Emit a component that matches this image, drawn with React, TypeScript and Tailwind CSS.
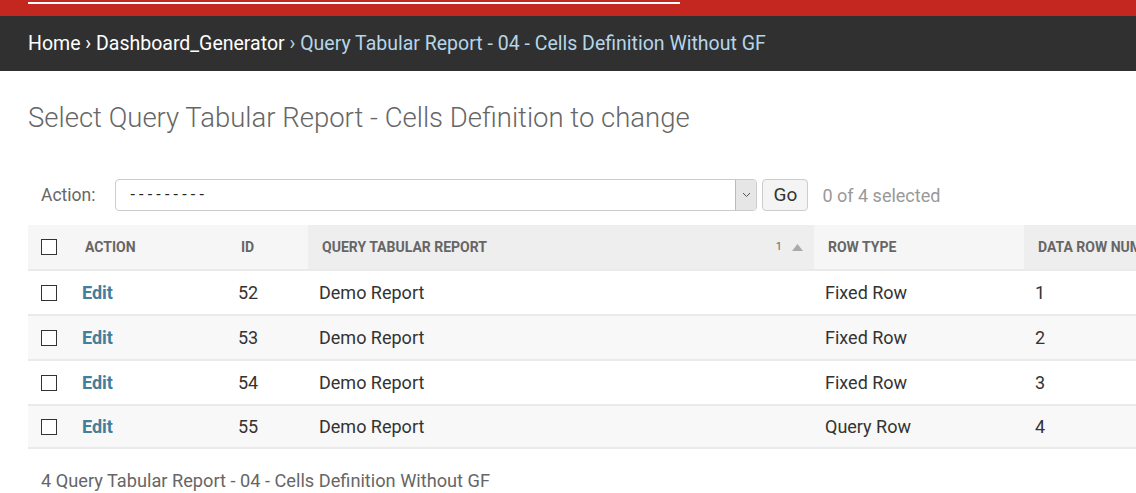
import React from "react";

const rows = [
  { id: 52, type: "Fixed Row", n: 1 },
  { id: 53, type: "Fixed Row", n: 2 },
  { id: 54, type: "Fixed Row", n: 3 },
  { id: 55, type: "Query Row", n: 4 },
];

function Box() {
  return <span className="block w-[16px] h-[16px] border border-[#333] bg-white" />;
}

export default function App() {
  return (
    <div className="w-[1136px] h-[493px] overflow-hidden bg-white" style={{ fontFamily: "Roboto, 'Liberation Sans', sans-serif" }}>
      <div className="h-[16px] bg-[#c4271f] pt-[2px] pl-[28px]">
        <div className="w-[652px] h-[2px] bg-white" />
      </div>
      <div className="h-[55px] bg-[#303030] flex items-center pl-[28px] text-[19.5px] text-white whitespace-pre">
        <span>Home</span>
        <span> › </span>
        <span>Dashboard_Generator</span>
        <span className="text-[#b5d6e8]"> › Query Tabular Report - 04 - Cells Definition Without GF</span>
      </div>
      <div className="pl-[28px] pt-[29px] h-[106px]">
        <h1 className="text-[27.5px] font-light text-[#666] leading-[36px]">
          Select Query Tabular Report - Cells Definition to change
        </h1>
      </div>
      <div className="flex items-center pl-[41px] h-[36px]">
        <span className="text-[17.5px] text-[#666]">Action:</span>
        <div className="ml-[20px] w-[642px] h-[32px] border border-[#ccc] rounded-[4px] flex items-center overflow-hidden">
          <span className="flex-1 pl-[14px] text-[16px] text-[#222] tracking-[4.2px]">---------</span>
          <span className="w-[21px] h-full bg-[#e6e6e6] border-l border-[#bbb] flex items-center justify-center">
            <svg width="9" height="6" viewBox="0 0 9 6"><path d="M1 1l3.5 3.5L8 1" fill="none" stroke="#555" strokeWidth="1" /></svg>
          </span>
        </div>
        <button className="ml-[5px] w-[46px] h-[32px] border border-[#ccc] rounded-[4px] bg-[#f4f4f4] text-[19px] text-[#333]">Go</button>
        <span className="ml-[14px] text-[18px] text-[#999]">0 of 4 selected</span>
      </div>
      <div className="ml-[28px] mt-[12px] w-[1200px]">
        <div className="flex h-[44px] items-center text-[14px] font-bold text-[#666] bg-[#f6f6f6]">
          <div className="w-[43px] pl-[13px] h-full flex items-center"><Box /></div>
          <div className="w-[156px] pl-[14px]">ACTION</div>
          <div className="w-[81px] pl-[14px]">ID</div>
          <div className="w-[506px] pl-[14px] h-full flex items-center bg-[#eeeeee]">
            <span className="flex-1">QUERY TABULAR REPORT</span>
            <span className="text-[11px] font-normal text-[#666] mr-[10px]">1</span>
            <svg width="11" height="7" viewBox="0 0 11 7" className="mr-[11px]"><path d="M0 7L5.5 0L11 7z" fill="#aaa" /></svg>
          </div>
          <div className="w-[210px] pl-[14px]">ROW TYPE</div>
          <div className="flex-1 pl-[14px] h-full flex items-center bg-[#eeeeee]">DATA ROW NUMBER</div>
        </div>
        {rows.map((r, i) => (
          <div key={r.id} className={`flex h-[45px] items-center text-[18px] text-[#333] border-t-[2px] border-[#eaeaea] ${i % 2 ? "bg-[#f8f8f8]" : "bg-white"} ${i === 3 ? "border-b-[2px]" : ""}`}>
            <div className="w-[43px] pl-[13px] flex items-center"><Box /></div>
            <div className="w-[156px] pl-[11px] font-bold text-[#447e9b]">Edit</div>
            <div className="w-[81px] pl-[11px]">{r.id}</div>
            <div className="w-[506px] pl-[11px]">Demo Report</div>
            <div className="w-[210px] pl-[11px]">{r.type}</div>
            <div className="flex-1 pl-[11px]">{r.n}</div>
          </div>
        ))}
        <div className="pl-[13px] pt-[18px] text-[18.2px] text-[#666]">4 Query Tabular Report - 04 - Cells Definition Without GF</div>
      </div>
    </div>
  );
}
